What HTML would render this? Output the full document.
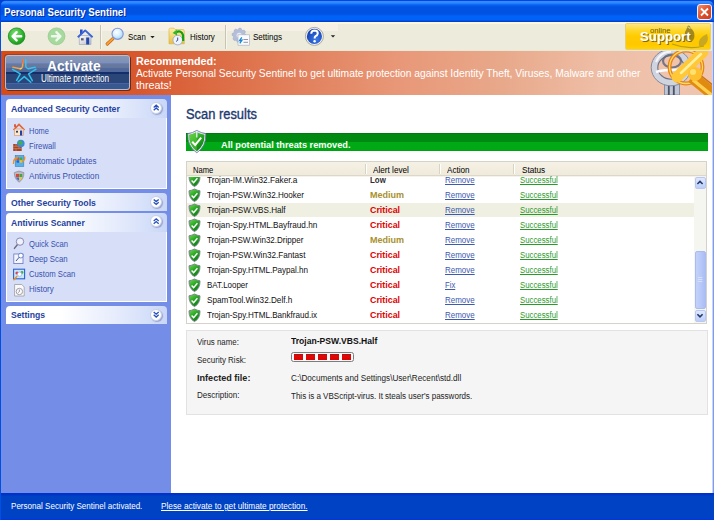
<!DOCTYPE html>
<html><head><meta charset="utf-8">
<style>
*{margin:0;padding:0;box-sizing:border-box}
html,body{width:714px;height:520px;overflow:hidden;background:#fff;font-family:"Liberation Sans",sans-serif;font-size:11px;color:#000}
.a{position:absolute;white-space:nowrap;transform-origin:0 0}
svg{position:absolute;overflow:visible}
#title{left:0;top:0;width:714px;height:22px;background:linear-gradient(#0048e0 0,#0048e0 1px,#3a8cff 1px,#2f86ff 3px,#0462f2 5px,#0353e2 7px,#0052e0 14px,#0262f8 16px,#0062f8 20px,#0040d0 21px,#0040d0 22px)}
#close{left:697px;top:4px;width:15px;height:16px;border:1px solid #f4f0ff;border-radius:3px;background:linear-gradient(135deg,#f0906a,#e0502c 50%,#c8401e)}
#tb{left:0;top:22px;width:714px;height:29px;background:linear-gradient(#fbf6e0 0,#fbf6e0 2px,#ecebdc 2px,#ecebdc 28px,#e6e4d4 29px)}
#tbband{left:0;top:24px;width:338px;height:7px;background:#f6f0e6}
.sep{position:absolute;top:25px;width:2px;height:24px;border-left:1px solid #c8c4b2;border-right:1px solid #f8f6ee}
#support{left:625px;top:23px;width:86px;height:27px;border:1px solid #e8d070;border-radius:2px;background:linear-gradient(#ffe680 0,#ffd830 6px,#ffcc00 12px,#ffc800 20px,#ffd400 26px)}
#banner{left:0;top:51px;width:714px;height:44px;background:linear-gradient(90deg,#d64a16 0,#d8582e 140px,#de744e 250px,#e89878 400px,#e8a88a 500px,#eebea6 600px,#f0c6b0 714px)}
#act{left:5px;top:55px;width:125px;height:35px;border:1px solid #b4bed8;border-radius:3px;background:linear-gradient(#8798b8 0,#8090b2 7px,#6a80c0 7px,#6a80c0 8px,#687a9e 8px,#62769e 12px,#52699a 12px,#50679a 16px,#142e6c 16px,#142e6c 18px,#2a4678 18px,#2a4678 27px,#4862a6 27px,#4862a6 28px,#3a5890 28px);box-shadow:1px 1px 0 #6a2a10, -1px -1px 0 rgba(80,40,20,.35)}
#side{left:0;top:95px;width:171px;height:398px;background:#748de6}
#main{left:171px;top:95px;width:541px;height:398px;background:#fff}
#rb{left:712px;top:22px;width:2px;height:471px;background:linear-gradient(90deg,#c8d4fa 0,#c8d4fa 1px,#809af0 1px)}
#lb{left:0;top:0;width:1px;height:520px;background:linear-gradient(#0040d8 0,#0048e0 22px,#0050e6 23px)}
#status{left:0;top:493px;width:714px;height:27px;background:linear-gradient(#0030c8 0,#0034c8 2px,#0042c4 3px,#0042c4 25px,#0038dc 26px,#0036e0 27px)}
.ph{position:absolute;left:6px;width:161px;height:19px;border-radius:4px 4px 0 0;background:linear-gradient(90deg,#fff 0,#fff 55px,#f3f6fe 80px,#e6ecfc 110px,#d8e2fa 135px,#c9d6f6 161px)}
.pb{position:absolute;left:6px;width:161px;background:#d6dff7;border:1px solid #fff;border-top:none}
.chev{position:absolute;width:12px;height:12px;border-radius:50%;background:#fff;border:1px solid #c8d0ea;box-shadow:1px 1px 1px rgba(30,40,120,.3)}
#bar{left:186px;top:133px;width:522px;height:18px;background:linear-gradient(#007a10 0,#007a10 1px,#008a12 1px,#008a12 9px,#00aa16 9px,#00a814 17px,#009a12 18px)}
#tbl{left:186px;top:161px;width:521px;height:163px;border:1px solid #d5d2ca;background:#fff}
#thead{left:187px;top:162px;width:519px;height:14px;background:linear-gradient(#f5f1e4,#efeadb);border-bottom:1px solid #dcd8c8;box-shadow:0 1px 0 #f4f2ea}
.hsep{position:absolute;top:164px;width:2px;height:10px;border-left:1px solid #d8d4c2;border-right:1px solid #fff}
#hl{left:187px;top:203px;width:507px;height:14px;background:#efefe2}
#sb{left:694px;top:176px;width:12px;height:147px;background:#f6f6f0}
.sbtn{position:absolute;left:695px;width:11px;height:12px;border:1px solid #b8c8f2;border-radius:2px;background:linear-gradient(#dfe8ff,#bccdf8)}
#thumb{left:695px;top:251px;width:11px;height:58px;border:1px solid #a8bcf2;border-radius:2px;background:linear-gradient(90deg,#c4d2fa,#b8c8f8 50%,#aabef4)}
#det{left:186px;top:330px;width:522px;height:85px;border:1px solid #e2e2e2;background:#f5f5f5}
#risk{left:290.7px;top:352px;width:63.7px;height:10px;border:1px solid #7c7c7c;border-radius:2.5px;background:#fafafa}
.rb{position:absolute;top:354.4px;width:9.3px;height:5.4px;background:linear-gradient(#a81010 0,#c81010 1px,#e00808 2.5px,#e00000)}

#tlc{left:0;top:0;width:5px;height:5px;background:radial-gradient(circle at 5px 5px,rgba(0,0,0,0) 0,rgba(0,0,0,0) 3.5px,#0040d0 4.5px)}
#trc{left:709px;top:0;width:5px;height:5px;background:radial-gradient(circle at 0 5px,rgba(0,0,0,0) 0,rgba(0,0,0,0) 3.5px,#0040d0 4.5px)}

</style></head><body>
<div id="title" class="a"></div>
<div id="tlc" class="a"></div><div id="trc" class="a"></div>
<div id="close" class="a"></div>
<svg style="left:697px;top:4px" width="15" height="16"><path d="M4 4.5 L11 11.5 M11 4.5 L4 11.5" stroke="#fff" stroke-width="1.8"/></svg>
<div id="tb" class="a"></div>
<div id="tbband" class="a"></div>
<div class="sep" style="left:100px"></div>
<div class="sep" style="left:225px"></div>
<div id="support" class="a"></div>
<div id="banner" class="a"></div>
<div id="act" class="a"></div>
<div id="side" class="a"></div>
<div id="main" class="a"></div>
<!-- sidebar panels -->
<div class="ph" style="top:99px"></div><div class="pb" style="top:118px;height:71px"></div>
<div class="chev" style="left:150.2px;top:101.8px"></div>
<div class="ph" style="top:193px;height:18px"></div>
<div class="chev" style="left:150.2px;top:196px"></div>
<div class="ph" style="top:213px"></div><div class="pb" style="top:232px;height:70px"></div>
<div class="chev" style="left:150.2px;top:215.4px"></div>
<div class="ph" style="top:306px;height:18px"></div>
<div class="chev" style="left:150.2px;top:308.6px"></div>
<!-- main -->
<div id="bar" class="a"></div>
<div id="tbl" class="a"></div>
<div id="hl" class="a"></div>
<div id="sb" class="a"></div>
<div class="sbtn" style="top:177px"></div>
<div id="thumb" class="a"></div>
<div class="sbtn" style="top:310px"></div>
<div id="det" class="a"></div>
<div id="risk" class="a"></div>
<div class="rb" style="left:293.8px"></div><div class="rb" style="left:305.7px"></div><div class="rb" style="left:317.6px"></div><div class="rb" style="left:329.5px"></div><div class="rb" style="left:341.6px"></div>
<div id="status" class="a"></div>
<div id="lb" class="a"></div>
<div id="rb" class="a"></div>

<svg style="left:0;top:0" width="714" height="520" viewBox="0 0 714 520">
<defs>
<radialGradient id="gback" cx="0.4" cy="0.35" r="0.7"><stop offset="0" stop-color="#7ee07a"/><stop offset="0.6" stop-color="#36b832"/><stop offset="1" stop-color="#14901a"/></radialGradient>
<radialGradient id="glens" cx="0.4" cy="0.35" r="0.7"><stop offset="0" stop-color="#ffffff"/><stop offset="0.5" stop-color="#d8f0ff"/><stop offset="1" stop-color="#9cd2f4"/></radialGradient>
<radialGradient id="ghelp" cx="0.6" cy="0.7" r="0.8"><stop offset="0" stop-color="#3a78e8"/><stop offset="1" stop-color="#1238a8"/></radialGradient>
<linearGradient id="gwall" x1="0" y1="0" x2="1" y2="1"><stop offset="0" stop-color="#ffffff"/><stop offset="1" stop-color="#b8bccc"/></linearGradient>
<linearGradient id="gshield" x1="0" y1="0" x2="0.6" y2="1"><stop offset="0" stop-color="#7ada60"/><stop offset="0.5" stop-color="#2aaa22"/><stop offset="1" stop-color="#0c8014"/></linearGradient>
<linearGradient id="gfold" x1="0" y1="0" x2="0" y2="1"><stop offset="0" stop-color="#fff0a8"/><stop offset="1" stop-color="#e8c040"/></linearGradient>
<linearGradient id="ggold" x1="0" y1="0" x2="1" y2="1"><stop offset="0" stop-color="#ffe890"/><stop offset="1" stop-color="#e89010"/></linearGradient>
<linearGradient id="gsilver" x1="0" y1="0" x2="1" y2="1"><stop offset="0" stop-color="#e8ecf4"/><stop offset="1" stop-color="#8890a8"/></linearGradient>
</defs>
<circle cx="16.6" cy="36.2" r="8.3" fill="url(#gback)" stroke="#1a8a1e" stroke-width="0.8"/>
<path d="M12.6 36.3 H21.2 M16.6 32.2 L12.6 36.3 L16.6 40.4" fill="none" stroke="#fff" stroke-width="2.4" stroke-linecap="round" stroke-linejoin="round"/>
<circle cx="56.5" cy="36.3" r="8.4" fill="#a6d99e" stroke="#94cc8c" stroke-width="0.8"/>
<path d="M52 36.3 H60.4 M56.4 32.2 L60.4 36.3 L56.4 40.4" fill="none" stroke="#eef8ec" stroke-width="2.4" stroke-linecap="round" stroke-linejoin="round"/>
<rect x="79.2" y="35.5" width="11.8" height="9" fill="url(#gwall)" stroke="#9aa0b4" stroke-width="0.6"/>
<rect x="80" y="29.5" width="2.6" height="4.5" fill="#2a52c8"/>
<path d="M77.8 37.2 L85.2 30.4 L92.6 37.2" fill="none" stroke="#3a64d8" stroke-width="1.9" stroke-linejoin="round"/>
<rect x="86.2" y="37.5" width="3" height="7" fill="#2448a8"/>
<rect x="81" y="38.2" width="2.6" height="2.2" fill="#5a5a68"/>
<path d="M113 38.6 L107.2 44" stroke="#c05a10" stroke-width="3.2" stroke-linecap="round"/>
<path d="M113 38.6 L107.2 44" stroke="#f8a030" stroke-width="2" stroke-linecap="round"/>
<circle cx="117.6" cy="33.8" r="5.6" fill="url(#glens)" stroke="#8094d8" stroke-width="1.1"/>
<path d="M150.3 36 L154.7 36 L152.5 38.3 Z" fill="#222"/>
<path d="M169 29.5 Q169 28.2 170.5 28.2 L174 28.2 L175 29.5 L183 29.5 Q184.3 29.5 184.3 31 L184.3 43.8 L169 43.8 Z" fill="url(#gfold)" stroke="#d8b040" stroke-width="0.6"/>
<circle cx="177.7" cy="40.1" r="4.8" fill="#eef4ff" stroke="#98a4c8" stroke-width="0.8"/>
<path d="M177.7 37.5 V40.3 L176 41.5" fill="none" stroke="#2a3a80" stroke-width="0.9"/>
<path d="M176 32.2 Q181.5 29.8 183 35 L183.2 41" fill="none" stroke="#14a014" stroke-width="2.2"/>
<path d="M172.6 33 L176.8 29.6 L177.2 35.6 Z" fill="#30b830"/>
<g fill="#b4bed8" stroke="#98a4c4" stroke-width="0.5">
<polygon points="246.40,35.30 246.15,37.16 244.05,38.10 244.29,40.39 242.80,41.54 240.65,40.71 239.20,42.50 237.34,42.25 236.40,40.15 234.11,40.39 232.96,38.90 233.79,36.75 232.00,35.30 232.25,33.44 234.35,32.50 234.11,30.21 235.60,29.06 237.75,29.89 239.20,28.10 241.06,28.35 242.00,30.45 244.29,30.21 245.44,31.70 244.61,33.85"/>
</g>
<circle cx="239.2" cy="35.3" r="2.6" fill="#e8ecf6"/>
<rect x="238" y="34.8" width="11.6" height="10.4" fill="#fbfbfd" stroke="#b0b4c4" stroke-width="0.7"/>
<path d="M241.8 37.4 L239.6 40.6 L242 40.2 L239.8 43.4" fill="none" stroke="#1a88d0" stroke-width="1.3"/>
<path d="M243.5 39.5 H248 M243.5 42.3 H248" stroke="#8c94b4" stroke-width="1"/>
<circle cx="314.4" cy="36.4" r="9" fill="#f6f6f2" stroke="#a0a098" stroke-width="0.9"/>
<circle cx="314.4" cy="36.4" r="7.6" fill="url(#ghelp)"/>
<path d="M311.2 33.8 Q311.4 30.6 314.6 30.6 Q317.8 30.8 317.8 33.4 Q317.6 35.2 315.6 36.2 Q314.6 36.8 314.6 38.4" fill="none" stroke="#fff" stroke-width="2"/>
<circle cx="314.6" cy="41.2" r="1.2" fill="#fff"/>
<path d="M330.8 35.3 L335.2 35.3 L333 37.6 Z" fill="#222"/>
<path d="M688.5 25.5 Q690.5 25.5 690.5 28 Q695 31 694.4 37 Q693.5 42 689 42 Q684.6 41.6 684.6 36.5 Q684.6 31 687 28 Q687 25.5 688.5 25.5 Z" fill="#8c7420" opacity="0.8"/>
<path d="M687.5 27 Q690 27 690 29" stroke="#e8d8a0" stroke-width="1" fill="none"/>
<path d="M699 46 Q697 38 707 34 Q710 42 703 46 Z" fill="#b09a30" opacity="0.7"/>
<path d="M672 44 Q688 50 704 46" fill="none" stroke="#a08a20" stroke-width="1.2" opacity="0.7"/>
<defs><linearGradient id="gorg" x1="0" y1="0" x2="1" y2="1"><stop offset="0" stop-color="#f06040"/><stop offset="0.5" stop-color="#f8a040"/><stop offset="1" stop-color="#ffd040"/></linearGradient></defs>
<g fill="none" stroke-width="1.5" stroke-linecap="round" stroke-linejoin="round">
<path d="M22.8 59.8 L22.6 66.2 Q22.4 68.4 20.3 68.8 L12.9 67.2" stroke="#f4a040"/>
<path d="M22.8 59.8 L22.7 63" stroke="#f07040"/>
<path d="M21.5 68.4 L20.3 68.8" stroke="#ffd040"/>
<path d="M25.8 59.8 L25.8 66.2 Q26 68.4 28.3 68.8 L35.1 67.2" stroke="#38c4ee"/>
<path d="M12.6 69.4 L20.3 73.8 L16.6 80.3" stroke="#30c0ee"/>
<path d="M18.2 81.8 L24.3 76.6 L30.8 82.2" stroke="#30c0ee"/>
<path d="M32.3 80.6 L28.6 73.8 L36 69.2" stroke="#30c0ee"/>
</g>
<clipPath id="kc"><rect x="640" y="51" width="72" height="44"/></clipPath><g clip-path="url(#kc)">
<path d="M664.5 80 L664.5 95 L679.5 95 L679.5 80 Z" fill="#c0c6d4" stroke="#7a8298" stroke-width="0.8"/>
<path d="M668.8 86 V95 M673.8 86 V95" stroke="#4a5268" stroke-width="1.8"/>
<ellipse cx="671" cy="67.5" rx="16.5" ry="15" fill="none" stroke="#d0d4de" stroke-width="6.5"/>
<ellipse cx="671" cy="67.5" rx="19.8" ry="18.3" fill="none" stroke="#7a8298" stroke-width="0.9"/>
<ellipse cx="671" cy="67.5" rx="13.2" ry="11.7" fill="none" stroke="#6a7288" stroke-width="1.1"/>
<path d="M656 62 Q660 52 671 51.5" stroke="#f4f6fa" stroke-width="2" fill="none"/>
<ellipse cx="672" cy="61" rx="9" ry="6.5" fill="none" stroke="#5a6278" stroke-width="2.2" opacity="0.8"/>
<path d="M656 72 Q664 69 692 70" stroke="#fafbfd" stroke-width="2.5" fill="none"/>
<circle cx="686" cy="67" r="16.5" fill="none" stroke="#e88410" stroke-width="3.8"/>
<circle cx="686" cy="67" r="16.5" fill="none" stroke="#ffd868" stroke-width="1.3"/>
<path d="M692 77 L714 95" stroke="#e08a10" stroke-width="12"/>
<path d="M693 80 L714 97" stroke="#ffd050" stroke-width="3.5"/>
<path d="M699 74 L714 86" stroke="#c87010" stroke-width="1.4"/>
<path d="M703 52 L677 77" stroke="#ffc838" stroke-width="11" stroke-linecap="round"/>
<path d="M701 54 L681 73" stroke="#fff0a0" stroke-width="2.5" stroke-linecap="round"/>
<circle cx="695" cy="74" r="7" fill="#ffc030"/>
<circle cx="693" cy="72" r="3" fill="#ffe070"/>
</g>
<path d="M13.5 130 L19 124.5 L24.5 130" fill="none" stroke="#e86030" stroke-width="1.6"/>
<rect x="14.6" y="129" width="9" height="6.6" fill="#fce8c8" stroke="#d09070" stroke-width="0.6"/>
<rect x="20" y="130.5" width="2.2" height="5" fill="#2040b0"/>
<rect x="16" y="130.8" width="2" height="1.8" fill="#304070"/>
<rect x="14.2" y="124.2" width="1.6" height="3" fill="#d84020"/>
<rect x="13.2" y="144" width="8.5" height="7" fill="#a8441e"/>
<path d="M13.2 146.3 H21.7 M13.2 148.6 H21.7 M16 144 V146.3 M19 146.3 V148.6 M16 148.6 V151" stroke="#e0a080" stroke-width="0.5"/>
<circle cx="20.8" cy="143.5" r="3.8" fill="#3a8ae0"/><path d="M18 142 Q20 140 22 141.5 Q23.5 143 22 145 Q20.5 144 19 145" fill="#48b040"/>
<rect x="15.2" y="155.5" width="8.6" height="11" fill="#58b0e8" stroke="#3880c0" stroke-width="0.6"/>
<rect x="16.6" y="157.5" width="2.6" height="2.4" fill="#f04020"/><rect x="19.6" y="157.5" width="2.6" height="2.4" fill="#40b030"/><rect x="16.6" y="160.3" width="2.6" height="2.4" fill="#2060e0"/><rect x="19.6" y="160.3" width="2.6" height="2.4" fill="#f8c020"/>
<path d="M13.5 164 Q13 158.5 18 157.5 M24.5 156.5 Q25.5 160 22 162" fill="none" stroke="#f09020" stroke-width="1.4"/>
<path d="M19.1 171 L23.9 172.6 Q24 179 19.1 182.2 Q14.2 179 14.3 172.6 Z" fill="#b8b8c0" stroke="#808090" stroke-width="0.6"/>
<path d="M16 174 H19 V177 H15.8 Z" fill="#e84030"/><path d="M19.4 174 H22.3 V177 H19.4 Z" fill="#40a840"/><path d="M15.9 177.4 H19 V180.4 Q16.6 179.4 15.9 177.4 Z" fill="#3070e0"/><path d="M19.4 177.4 H22.3 Q21.6 179.4 19.4 180.4 Z" fill="#f8c828"/>
<path d="M17.5 244.5 L14.4 248.4" stroke="#6a6a80" stroke-width="1.4" stroke-linecap="round"/>
<circle cx="20" cy="241.6" r="3.7" fill="#eef2ff" stroke="#8a8ab0" stroke-width="1"/>
<rect x="13.8" y="254" width="9.2" height="9.6" fill="#f4f6ff" stroke="#6878c0" stroke-width="0.8"/>
<circle cx="20.8" cy="255.6" r="2.4" fill="#fff" stroke="#5870c8" stroke-width="0.8"/><path d="M19.2 257.2 L16 261" stroke="#4058a0" stroke-width="1"/>
<rect x="13.6" y="269.2" width="11" height="9.6" fill="#c8e8ff" stroke="#2a60d0" stroke-width="1.1"/>
<circle cx="17" cy="273" r="1.6" fill="#e84040"/><circle cx="22" cy="272.4" r="1.4" fill="#40b040"/><circle cx="19.6" cy="274.2" r="2.2" fill="#fff" stroke="#7aa0e0" stroke-width="0.6"/>
<path d="M17.2 276 L13.4 280.2" stroke="#f09020" stroke-width="1.4"/>
<path d="M14.6 284.5 H21.8 L24.2 287 V296 H14.6 Z" fill="#fafafa" stroke="#9a9aa4" stroke-width="0.8"/>
<circle cx="19.4" cy="291.5" r="3.2" fill="none" stroke="#8a8a98" stroke-width="0.8"/><path d="M19.4 289.6 V291.6 L18.2 292.6" fill="none" stroke="#5a5a70" stroke-width="0.6"/>
<path d="M153.7 107.4 L156.2 105.2 L158.7 107.4 M153.7 110.2 L156.2 108.0 L158.7 110.2" fill="none" stroke="#2850c0" stroke-width="1.35"/>
<path d="M153.7 199.4 L156.2 201.6 L158.7 199.4 M153.7 202.2 L156.2 204.4 L158.7 202.2" fill="none" stroke="#2850c0" stroke-width="1.35"/>
<path d="M153.7 221.0 L156.2 218.8 L158.7 221.0 M153.7 223.8 L156.2 221.6 L158.7 223.8" fill="none" stroke="#2850c0" stroke-width="1.35"/>
<path d="M153.7 312.0 L156.2 314.2 L158.7 312.0 M153.7 314.8 L156.2 317.0 L158.7 314.8" fill="none" stroke="#2850c0" stroke-width="1.35"/>
<path d="M196.8 130.4 Q201 133 205.8 133.6 Q206.4 146.5 196.8 152.8 Q187.2 146.5 187.8 133.6 Q192.6 133 196.8 130.4 Z" fill="#e8ecf8" stroke="#6a70a0" stroke-width="0.8"/>
<path d="M196.8 132 Q200.6 134.2 204.5 134.8 Q204.8 145.6 196.8 151.2 Q188.8 145.6 189.1 134.8 Q193 134.2 196.8 132 Z" fill="url(#gshield)"/>
<path d="M196.8 132 Q193 134.2 189.1 134.8 Q188.8 145.6 196.8 151.2 Z" fill="#5ccc3c" opacity="0.55"/>
<path d="M196.8 131.5 L196.8 137.5" stroke="#f0f4ff" stroke-width="1.2"/>
<path d="M192.2 141.8 L195.2 145 L201.2 137.6" fill="none" stroke="#fff" stroke-width="2"/>
<path d="M194.5 174.0 Q197.2 175.4 200 175.8 Q200.2 183.6 194.5 186.6 Q188.8 183.6 189 175.8 Q191.8 175.4 194.5 174.0 Z" fill="url(#gshield)" stroke="#7c7a8e" stroke-width="0.9"/>
<path d="M191.6 180.6 L193.6 182.6 L197.4 178.2" fill="none" stroke="#fff" stroke-width="1.4"/>
<path d="M194.5 189.0 Q197.2 190.4 200 190.8 Q200.2 198.6 194.5 201.6 Q188.8 198.6 189 190.8 Q191.8 190.4 194.5 189.0 Z" fill="url(#gshield)" stroke="#7c7a8e" stroke-width="0.9"/>
<path d="M191.6 195.6 L193.6 197.6 L197.4 193.2" fill="none" stroke="#fff" stroke-width="1.4"/>
<path d="M194.5 204.0 Q197.2 205.4 200 205.8 Q200.2 213.6 194.5 216.6 Q188.8 213.6 189 205.8 Q191.8 205.4 194.5 204.0 Z" fill="url(#gshield)" stroke="#7c7a8e" stroke-width="0.9"/>
<path d="M191.6 210.6 L193.6 212.6 L197.4 208.2" fill="none" stroke="#fff" stroke-width="1.4"/>
<path d="M194.5 219.0 Q197.2 220.4 200 220.8 Q200.2 228.6 194.5 231.6 Q188.8 228.6 189 220.8 Q191.8 220.4 194.5 219.0 Z" fill="url(#gshield)" stroke="#7c7a8e" stroke-width="0.9"/>
<path d="M191.6 225.6 L193.6 227.6 L197.4 223.2" fill="none" stroke="#fff" stroke-width="1.4"/>
<path d="M194.5 234.0 Q197.2 235.4 200 235.8 Q200.2 243.6 194.5 246.6 Q188.8 243.6 189 235.8 Q191.8 235.4 194.5 234.0 Z" fill="url(#gshield)" stroke="#7c7a8e" stroke-width="0.9"/>
<path d="M191.6 240.6 L193.6 242.6 L197.4 238.2" fill="none" stroke="#fff" stroke-width="1.4"/>
<path d="M194.5 249.0 Q197.2 250.4 200 250.8 Q200.2 258.6 194.5 261.6 Q188.8 258.6 189 250.8 Q191.8 250.4 194.5 249.0 Z" fill="url(#gshield)" stroke="#7c7a8e" stroke-width="0.9"/>
<path d="M191.6 255.6 L193.6 257.6 L197.4 253.2" fill="none" stroke="#fff" stroke-width="1.4"/>
<path d="M194.5 264.0 Q197.2 265.4 200 265.8 Q200.2 273.6 194.5 276.6 Q188.8 273.6 189 265.8 Q191.8 265.4 194.5 264.0 Z" fill="url(#gshield)" stroke="#7c7a8e" stroke-width="0.9"/>
<path d="M191.6 270.6 L193.6 272.6 L197.4 268.2" fill="none" stroke="#fff" stroke-width="1.4"/>
<path d="M194.5 279.0 Q197.2 280.4 200 280.8 Q200.2 288.6 194.5 291.6 Q188.8 288.6 189 280.8 Q191.8 280.4 194.5 279.0 Z" fill="url(#gshield)" stroke="#7c7a8e" stroke-width="0.9"/>
<path d="M191.6 285.6 L193.6 287.6 L197.4 283.2" fill="none" stroke="#fff" stroke-width="1.4"/>
<path d="M194.5 294.0 Q197.2 295.4 200 295.8 Q200.2 303.6 194.5 306.6 Q188.8 303.6 189 295.8 Q191.8 295.4 194.5 294.0 Z" fill="url(#gshield)" stroke="#7c7a8e" stroke-width="0.9"/>
<path d="M191.6 300.6 L193.6 302.6 L197.4 298.2" fill="none" stroke="#fff" stroke-width="1.4"/>
<path d="M194.5 309.0 Q197.2 310.4 200 310.8 Q200.2 318.6 194.5 321.6 Q188.8 318.6 189 310.8 Q191.8 310.4 194.5 309.0 Z" fill="url(#gshield)" stroke="#7c7a8e" stroke-width="0.9"/>
<path d="M191.6 315.6 L193.6 317.6 L197.4 313.2" fill="none" stroke="#fff" stroke-width="1.4"/>
<path d="M697.4 184 L700 181.4 L702.6 184" fill="none" stroke="#243a6a" stroke-width="1.6"/>
<path d="M697.4 314.2 L700 316.8 L702.6 314.2" fill="none" stroke="#243a6a" stroke-width="1.6"/>
<path d="M698 277.5 H702.4 M698 279.5 H702.4 M698 281.5 H702.4" stroke="#dce6ff" stroke-width="0.8"/>
</svg>
<div id="thead" class="a"></div>
<div class="hsep" style="left:365px"></div>
<div class="hsep" style="left:439px"></div>
<div class="hsep" style="left:513px"></div>

<div class="a" style="left:4.00px;top:8.00px;font-size:10.3px;line-height:10.3px;font-weight:bold;color:#fff;transform:scaleX(0.9382);text-shadow:1px 1px 0 #0a2a9a;">Personal Security Sentinel</div>
<div class="a" style="left:128.00px;top:32.00px;font-size:9.5px;line-height:9.5px;font-weight:normal;color:#000;transform:scaleX(0.8189);">Scan</div>
<div class="a" style="left:189.50px;top:32.00px;font-size:9.5px;line-height:9.5px;font-weight:normal;color:#000;transform:scaleX(0.8387);">History</div>
<div class="a" style="left:252.70px;top:32.00px;font-size:9.5px;line-height:9.5px;font-weight:normal;color:#000;transform:scaleX(0.8474);">Settings</div>
<div class="a" style="left:650.00px;top:27.00px;font-size:8px;line-height:8px;font-weight:normal;color:#6a5a10;transform:scaleX(0.9588);">online</div>
<div class="a" style="left:639.70px;top:30.00px;font-size:13px;line-height:13px;font-weight:bold;color:#fff;transform:scaleX(1.0160);text-shadow:1px 1px 0 #8a6a00;">Support</div>
<div class="a" style="left:47.00px;top:59.00px;font-size:14.2px;line-height:14.2px;font-weight:bold;color:#fff;transform:scaleX(0.9709);">Activate</div>
<div class="a" style="left:40.50px;top:74.00px;font-size:10.4px;line-height:10.4px;font-weight:normal;color:#fff;transform:scaleX(0.7864);">Ultimate protection</div>
<div class="a" style="left:136.00px;top:56.00px;font-size:11px;line-height:11px;font-weight:bold;color:#fff;transform:scaleX(0.9774);">Recommended:</div>
<div class="a" style="left:136.00px;top:68.00px;font-size:10.5px;line-height:10.5px;font-weight:normal;color:#fff;transform:scaleX(0.9793);">Activate Personal Security Sentinel to get ultimate protection against Identity Theft, Viruses, Malware and other</div>
<div class="a" style="left:136.00px;top:80.00px;font-size:10.5px;line-height:10.5px;font-weight:normal;color:#fff;transform:scaleX(1.0205);">threats!</div>
<div class="a" style="left:10.80px;top:104.00px;font-size:9.8px;line-height:9.8px;font-weight:bold;color:#2642a0;transform:scaleX(0.8924);">Advanced Security Center</div>
<div class="a" style="left:28.60px;top:126.00px;font-size:9.6px;line-height:9.6px;font-weight:normal;color:#3850b0;transform:scaleX(0.7761);">Home</div>
<div class="a" style="left:28.60px;top:141.00px;font-size:9.6px;line-height:9.6px;font-weight:normal;color:#3850b0;transform:scaleX(0.8111);">Firewall</div>
<div class="a" style="left:28.60px;top:156.00px;font-size:9.6px;line-height:9.6px;font-weight:normal;color:#3850b0;transform:scaleX(0.8319);">Automatic Updates</div>
<div class="a" style="left:28.60px;top:171.00px;font-size:9.6px;line-height:9.6px;font-weight:normal;color:#3850b0;transform:scaleX(0.8492);">Antivirus Protection</div>
<div class="a" style="left:10.80px;top:198.00px;font-size:9.8px;line-height:9.8px;font-weight:bold;color:#2642a0;transform:scaleX(0.8879);">Other Security Tools</div>
<div class="a" style="left:10.80px;top:218.00px;font-size:9.8px;line-height:9.8px;font-weight:bold;color:#2642a0;transform:scaleX(0.8794);">Antivirus Scanner</div>
<div class="a" style="left:28.60px;top:239.00px;font-size:9.6px;line-height:9.6px;font-weight:normal;color:#3850b0;transform:scaleX(0.7964);">Quick Scan</div>
<div class="a" style="left:28.60px;top:254.00px;font-size:9.6px;line-height:9.6px;font-weight:normal;color:#3850b0;transform:scaleX(0.8126);">Deep Scan</div>
<div class="a" style="left:28.60px;top:269.00px;font-size:9.6px;line-height:9.6px;font-weight:normal;color:#3850b0;transform:scaleX(0.8052);">Custom Scan</div>
<div class="a" style="left:28.60px;top:284.00px;font-size:9.6px;line-height:9.6px;font-weight:normal;color:#3850b0;transform:scaleX(0.8286);">History</div>
<div class="a" style="left:10.80px;top:310.00px;font-size:9.8px;line-height:9.8px;font-weight:bold;color:#2642a0;transform:scaleX(0.8827);">Settings</div>
<div class="a" style="left:186.00px;top:108.00px;font-size:13.8px;line-height:13.8px;font-weight:normal;color:#1c3a70;transform:scaleX(0.9340);-webkit-text-stroke:0.35px #1c3a70;">Scan results</div>
<div class="a" style="left:221.40px;top:140.00px;font-size:9.8px;line-height:9.8px;font-weight:bold;color:#fff;transform:scaleX(0.9405);">All potential threats removed.</div>
<div class="a" style="left:193.00px;top:165.00px;font-size:9.6px;line-height:9.6px;font-weight:normal;color:#000;transform:scaleX(0.7919);">Name</div>
<div class="a" style="left:373.20px;top:165.00px;font-size:9.6px;line-height:9.6px;font-weight:normal;color:#000;transform:scaleX(0.8526);">Alert level</div>
<div class="a" style="left:447.00px;top:165.00px;font-size:9.6px;line-height:9.6px;font-weight:normal;color:#000;transform:scaleX(0.8470);">Action</div>
<div class="a" style="left:521.70px;top:165.00px;font-size:9.6px;line-height:9.6px;font-weight:normal;color:#000;transform:scaleX(0.8503);">Status</div>
<div class="a" style="left:207.00px;top:175.00px;font-size:9.6px;line-height:9.6px;font-weight:normal;color:#111;transform:scaleX(0.8595);">Trojan-IM.Win32.Faker.a</div>
<div class="a" style="left:369.60px;top:175.00px;font-size:9.6px;line-height:9.6px;font-weight:bold;color:#303030;transform:scaleX(0.8215);">Low</div>
<div class="a" style="left:444.60px;top:175.00px;font-size:9.6px;line-height:9.6px;font-weight:normal;color:#3d5ab0;transform:scaleX(0.8308);text-decoration:underline;">Remove</div>
<div class="a" style="left:519.70px;top:175.00px;font-size:9.6px;line-height:9.6px;font-weight:normal;color:#2a9a2a;transform:scaleX(0.8128);text-decoration:underline;">Successful</div>
<div class="a" style="left:207.00px;top:190.00px;font-size:9.6px;line-height:9.6px;font-weight:normal;color:#111;transform:scaleX(0.8454);">Trojan-PSW.Win32.Hooker</div>
<div class="a" style="left:369.60px;top:190.00px;font-size:9.6px;line-height:9.6px;font-weight:bold;color:#a89030;transform:scaleX(0.9408);">Medium</div>
<div class="a" style="left:444.60px;top:190.00px;font-size:9.6px;line-height:9.6px;font-weight:normal;color:#3d5ab0;transform:scaleX(0.8308);text-decoration:underline;">Remove</div>
<div class="a" style="left:519.70px;top:190.00px;font-size:9.6px;line-height:9.6px;font-weight:normal;color:#2a9a2a;transform:scaleX(0.8128);text-decoration:underline;">Successful</div>
<div class="a" style="left:207.00px;top:205.00px;font-size:9.6px;line-height:9.6px;font-weight:normal;color:#111;transform:scaleX(0.8454);">Trojan-PSW.VBS.Half</div>
<div class="a" style="left:369.60px;top:205.00px;font-size:9.6px;line-height:9.6px;font-weight:bold;color:#e00000;transform:scaleX(0.9228);">Critical</div>
<div class="a" style="left:444.60px;top:205.00px;font-size:9.6px;line-height:9.6px;font-weight:normal;color:#3d5ab0;transform:scaleX(0.8308);text-decoration:underline;">Remove</div>
<div class="a" style="left:519.70px;top:205.00px;font-size:9.6px;line-height:9.6px;font-weight:normal;color:#2a9a2a;transform:scaleX(0.8128);text-decoration:underline;">Successful</div>
<div class="a" style="left:207.00px;top:220.00px;font-size:9.6px;line-height:9.6px;font-weight:normal;color:#111;transform:scaleX(0.8547);">Trojan-Spy.HTML.Bayfraud.hn</div>
<div class="a" style="left:369.60px;top:220.00px;font-size:9.6px;line-height:9.6px;font-weight:bold;color:#e00000;transform:scaleX(0.9228);">Critical</div>
<div class="a" style="left:444.60px;top:220.00px;font-size:9.6px;line-height:9.6px;font-weight:normal;color:#3d5ab0;transform:scaleX(0.8308);text-decoration:underline;">Remove</div>
<div class="a" style="left:519.70px;top:220.00px;font-size:9.6px;line-height:9.6px;font-weight:normal;color:#2a9a2a;transform:scaleX(0.8128);text-decoration:underline;">Successful</div>
<div class="a" style="left:207.00px;top:235.00px;font-size:9.6px;line-height:9.6px;font-weight:normal;color:#111;transform:scaleX(0.8352);">Trojan-PSW.Win32.Dripper</div>
<div class="a" style="left:369.60px;top:235.00px;font-size:9.6px;line-height:9.6px;font-weight:bold;color:#a89030;transform:scaleX(0.9408);">Medium</div>
<div class="a" style="left:444.60px;top:235.00px;font-size:9.6px;line-height:9.6px;font-weight:normal;color:#3d5ab0;transform:scaleX(0.8308);text-decoration:underline;">Remove</div>
<div class="a" style="left:519.70px;top:235.00px;font-size:9.6px;line-height:9.6px;font-weight:normal;color:#2a9a2a;transform:scaleX(0.8128);text-decoration:underline;">Successful</div>
<div class="a" style="left:207.00px;top:250.00px;font-size:9.6px;line-height:9.6px;font-weight:normal;color:#111;transform:scaleX(0.8493);">Trojan-PSW.Win32.Fantast</div>
<div class="a" style="left:369.60px;top:250.00px;font-size:9.6px;line-height:9.6px;font-weight:bold;color:#e00000;transform:scaleX(0.9228);">Critical</div>
<div class="a" style="left:444.60px;top:250.00px;font-size:9.6px;line-height:9.6px;font-weight:normal;color:#3d5ab0;transform:scaleX(0.8308);text-decoration:underline;">Remove</div>
<div class="a" style="left:519.70px;top:250.00px;font-size:9.6px;line-height:9.6px;font-weight:normal;color:#2a9a2a;transform:scaleX(0.8128);text-decoration:underline;">Successful</div>
<div class="a" style="left:207.00px;top:265.00px;font-size:9.6px;line-height:9.6px;font-weight:normal;color:#111;transform:scaleX(0.8426);">Trojan-Spy.HTML.Paypal.hn</div>
<div class="a" style="left:369.60px;top:265.00px;font-size:9.6px;line-height:9.6px;font-weight:bold;color:#e00000;transform:scaleX(0.9228);">Critical</div>
<div class="a" style="left:444.60px;top:265.00px;font-size:9.6px;line-height:9.6px;font-weight:normal;color:#3d5ab0;transform:scaleX(0.8308);text-decoration:underline;">Remove</div>
<div class="a" style="left:519.70px;top:265.00px;font-size:9.6px;line-height:9.6px;font-weight:normal;color:#2a9a2a;transform:scaleX(0.8128);text-decoration:underline;">Successful</div>
<div class="a" style="left:207.00px;top:280.00px;font-size:9.6px;line-height:9.6px;font-weight:normal;color:#111;transform:scaleX(0.8283);">BAT.Looper</div>
<div class="a" style="left:369.60px;top:280.00px;font-size:9.6px;line-height:9.6px;font-weight:bold;color:#e00000;transform:scaleX(0.9228);">Critical</div>
<div class="a" style="left:444.60px;top:280.00px;font-size:9.6px;line-height:9.6px;font-weight:normal;color:#3d5ab0;transform:scaleX(0.8005);text-decoration:underline;">Fix</div>
<div class="a" style="left:519.70px;top:280.00px;font-size:9.6px;line-height:9.6px;font-weight:normal;color:#2a9a2a;transform:scaleX(0.8128);text-decoration:underline;">Successful</div>
<div class="a" style="left:207.00px;top:295.00px;font-size:9.6px;line-height:9.6px;font-weight:normal;color:#111;transform:scaleX(0.8508);">SpamTool.Win32.Delf.h</div>
<div class="a" style="left:369.60px;top:295.00px;font-size:9.6px;line-height:9.6px;font-weight:bold;color:#e00000;transform:scaleX(0.9228);">Critical</div>
<div class="a" style="left:444.60px;top:295.00px;font-size:9.6px;line-height:9.6px;font-weight:normal;color:#3d5ab0;transform:scaleX(0.8308);text-decoration:underline;">Remove</div>
<div class="a" style="left:519.70px;top:295.00px;font-size:9.6px;line-height:9.6px;font-weight:normal;color:#2a9a2a;transform:scaleX(0.8128);text-decoration:underline;">Successful</div>
<div class="a" style="left:207.00px;top:310.00px;font-size:9.6px;line-height:9.6px;font-weight:normal;color:#111;transform:scaleX(0.8431);">Trojan-Spy.HTML.Bankfraud.ix</div>
<div class="a" style="left:369.60px;top:310.00px;font-size:9.6px;line-height:9.6px;font-weight:bold;color:#e00000;transform:scaleX(0.9228);">Critical</div>
<div class="a" style="left:444.60px;top:310.00px;font-size:9.6px;line-height:9.6px;font-weight:normal;color:#3d5ab0;transform:scaleX(0.8308);text-decoration:underline;">Remove</div>
<div class="a" style="left:519.70px;top:310.00px;font-size:9.6px;line-height:9.6px;font-weight:normal;color:#2a9a2a;transform:scaleX(0.8128);text-decoration:underline;">Successful</div>
<div class="a" style="left:197.00px;top:337.00px;font-size:9.6px;line-height:9.6px;font-weight:normal;color:#1e1e1e;transform:scaleX(0.8203);">Virus name:</div>
<div class="a" style="left:197.00px;top:355.00px;font-size:9.6px;line-height:9.6px;font-weight:normal;color:#1e1e1e;transform:scaleX(0.8331);">Security Risk:</div>
<div class="a" style="left:197.00px;top:373.00px;font-size:9.8px;line-height:9.8px;font-weight:bold;color:#222;transform:scaleX(0.9262);">Infected file:</div>
<div class="a" style="left:197.00px;top:390.00px;font-size:9.6px;line-height:9.6px;font-weight:normal;color:#1e1e1e;transform:scaleX(0.8402);">Description:</div>
<div class="a" style="left:290.60px;top:336.00px;font-size:9.8px;line-height:9.8px;font-weight:bold;color:#111;transform:scaleX(0.8754);">Trojan-PSW.VBS.Half</div>
<div class="a" style="left:290.60px;top:373.00px;font-size:9.6px;line-height:9.6px;font-weight:normal;color:#222;transform:scaleX(0.8490);">C:\Documents and Settings\User\Recent\std.dll</div>
<div class="a" style="left:290.60px;top:391.00px;font-size:9.6px;line-height:9.6px;font-weight:normal;color:#222;transform:scaleX(0.8365);">This is a VBScript-virus. It steals user&#x27;s passwords.</div>
<div class="a" style="left:11.20px;top:501.00px;font-size:9.6px;line-height:9.6px;font-weight:normal;color:#fff;transform:scaleX(0.8407);">Personal Security Sentinel activated.</div>
<div class="a" style="left:161.00px;top:501.00px;font-size:9.6px;line-height:9.6px;font-weight:normal;color:#fff;transform:scaleX(0.8616);text-decoration:underline;">Plese activate to get ultimate protection.</div>
</body></html>
